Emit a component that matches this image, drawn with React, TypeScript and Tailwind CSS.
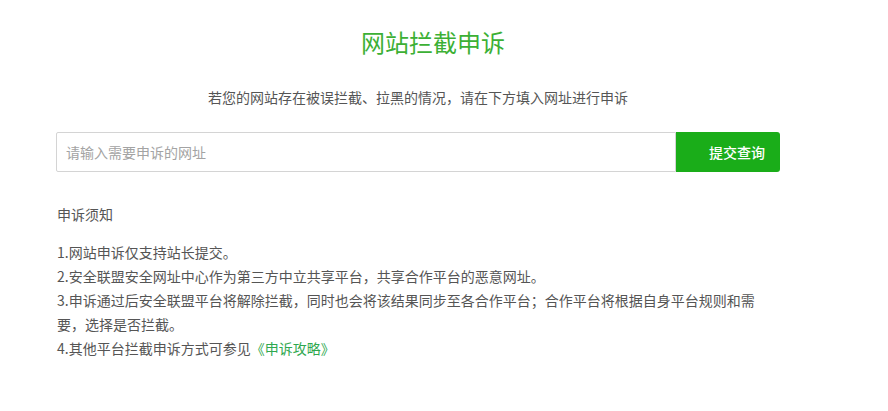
import { useState } from 'react';

const NOTES = [
    '1.网站申诉仅支持站长提交。',
    '2.安全联盟安全网址中心作为第三方中立共享平台，共享合作平台的恶意网址。',
    '3.申诉通过后安全联盟平台将解除拦截，同时也会将该结果同步至各合作平台；合作平台将根据自身平台规则和需要，选择是否拦截。',
];

export default function App() {
    const [url, setUrl] = useState('');

    return (
        <div className="min-h-screen bg-white font-['Noto_Sans_CJK_SC','Noto_Sans',sans-serif] text-[#555]">
            {/* Title */}
            <h1 className="pt-[26px] pr-[22px] text-center text-[24px] leading-[32px] font-normal text-[#3cb035]">
                网站拦截申诉
            </h1>

            <div className="w-[724px] ml-[56px]">
                <p className="mt-[29px] text-center text-[14px] leading-[20px] text-[#555]">
                    若您的网站存在被误拦截、拉黑的情况，请在下方填入网址进行申诉
                </p>

                {/* Search row */}
                <div className="mt-[25px] flex h-[40px]">
                    <input
                        type="text"
                        value={url}
                        onChange={(e) => setUrl(e.target.value)}
                        placeholder="请输入需要申诉的网址"
                        className="w-[620px] h-full border border-[#d4d4d4] rounded-l-[2px] pl-[9px] text-[14px] text-[#333] placeholder:text-[#a3a3a3] outline-none"
                    />
                    <button className="w-[104px] h-full bg-[#1aad19] rounded-r-[3px] pl-[33px] text-left text-[14px] font-medium text-white">
                        提交查询
                    </button>
                </div>

                {/* Notes */}
                <div className="mt-[32px] pl-px text-[14px]">
                    <h2 className="leading-[20px] font-normal text-[#555]">申诉须知</h2>
                    <ul className="mt-[16px] w-[704px] leading-[24px] text-[#555]">
                        {NOTES.map((n) => (
                            <li key={n}>{n}</li>
                        ))}
                        <li>
                            4.其他平台拦截申诉方式可参见
                            <a href="#" className="text-[#2fa84f]">《申诉攻略》</a>
                        </li>
                    </ul>
                </div>
            </div>
        </div>
    );
}
